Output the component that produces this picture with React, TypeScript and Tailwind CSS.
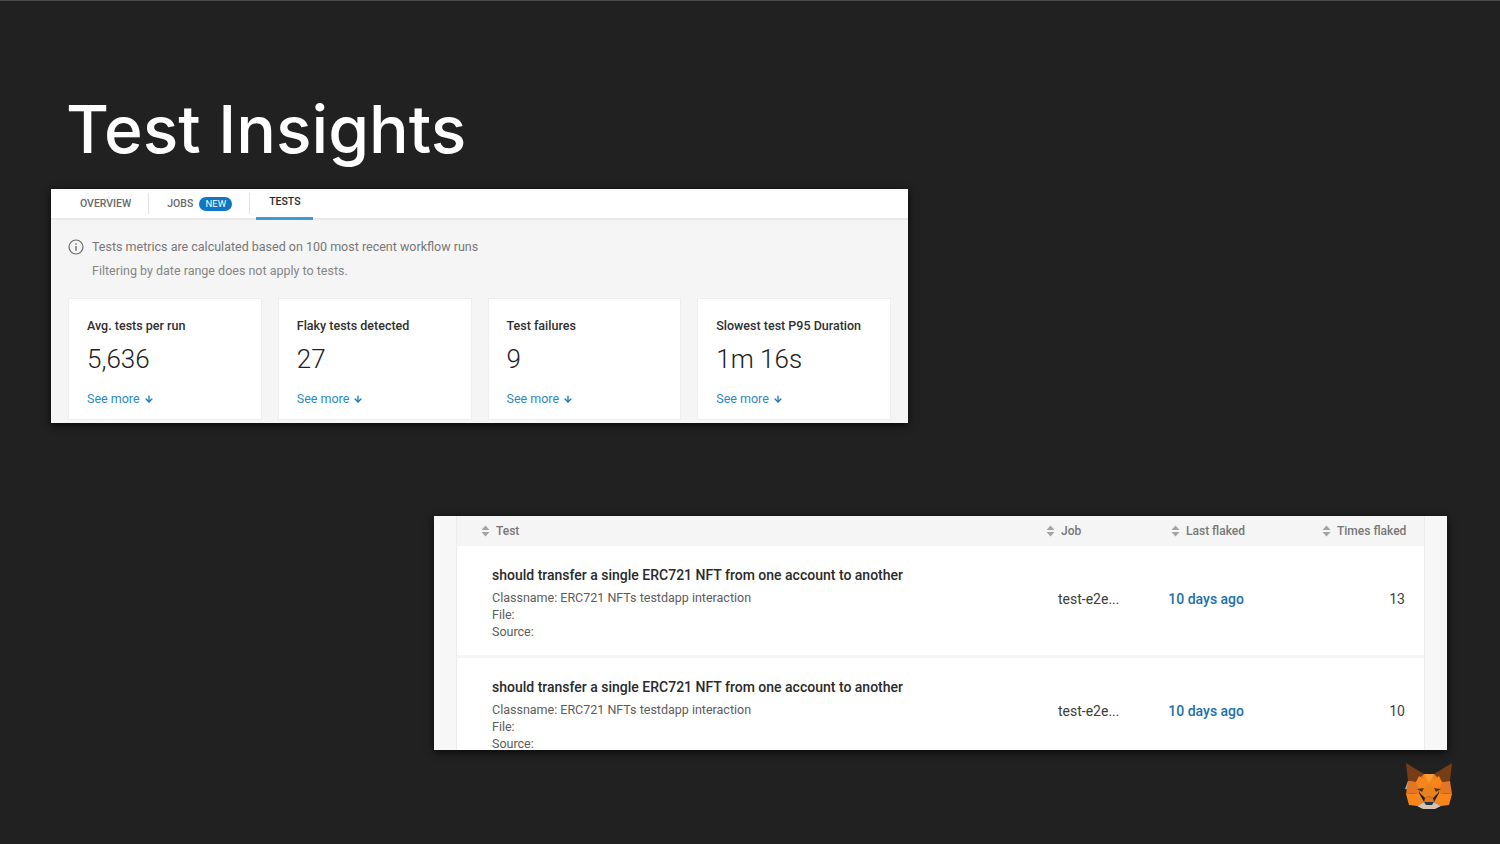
import React from "react";
import { ArrowDown } from "lucide-react";

const cards = [
  { title: "Avg. tests per run", value: "5,636" },
  { title: "Flaky tests detected", value: "27" },
  { title: "Test failures", value: "9" },
  { title: "Slowest test P95 Duration", value: "1m 16s" },
];

const rows = [{ flaked: "13" }, { flaked: "10" }];

function SortIcon() {
  return (
    <svg width="9" height="12" viewBox="0 0 9 12" className="shrink-0">
      <path d="M4.5 0.5 L8.5 5 H0.5 Z" fill="#a3a3a3" />
      <path d="M4.5 11.5 L8.5 7 H0.5 Z" fill="#a3a3a3" />
    </svg>
  );
}

function InfoIcon() {
  return (
    <svg width="16" height="16" viewBox="0 0 16 16" className="shrink-0">
      <circle cx="8" cy="8" r="7" fill="none" stroke="#6a6a6a" strokeWidth="1.2" />
      <rect x="7.3" y="7" width="1.4" height="4.8" fill="#6a6a6a" />
      <rect x="7.3" y="4.2" width="1.4" height="1.5" fill="#6a6a6a" />
    </svg>
  );
}

function Fox() {
  return (
    <svg width="48" height="46" viewBox="0 0 48 46">
      <polygon points="1,0 19,11 11,19 3,18" fill="#763d16" />
      <polygon points="47,0 29,11 37,19 45,18" fill="#763d16" />
      <polygon points="19,11 29,11 37,19 24,20 11,19" fill="#f5841f" />
      <polygon points="3,18 11,19 7,27 0,26" fill="#c0ad9e" />
      <polygon points="3,18 11,19 19,11 14,30 1,31" fill="#e27625" />
      <polygon points="45,18 37,19 29,11 34,30 47,31" fill="#e27625" />
      <polygon points="14,13 24,20 34,13 37,19 33,30 15,30 11,19" fill="#f6851b" />
      <polygon points="19,11 24,20 29,11" fill="#f89d35" />
      <polygon points="24,20 15,30 20,35 24,33" fill="#e8821e" />
      <polygon points="24,20 33,30 28,35 24,33" fill="#e8821e" />
      <polygon points="1,31 14,30 19,39 12,43 4,42" fill="#f6851b" />
      <polygon points="47,31 34,30 29,39 36,43 44,42" fill="#f6851b" />
      <polygon points="12,26 19,25 17,29" fill="#5b3410" />
      <polygon points="36,26 29,25 31,29" fill="#5b3410" />
      <polygon points="20,35 24,33 28,35 29,39 19,39" fill="#e4761b" />
      <polygon points="12,43 19,39 29,39 36,43 30,46 18,46" fill="#d7c1b3" />
      <polygon points="19,39 29,39 27,42 21,42" fill="#233447" />
    </svg>
  );
}

function SeeMore() {
  return (
    <div className="mt-[15px] flex items-center gap-[4px] text-[12.5px] leading-[16px] text-[#2b8ac6]">
      See more
      <ArrowDown size={10} strokeWidth={3.2} className="text-[#1b75b8]" />
    </div>
  );
}

function Tabs() {
  return (
    <div className="flex h-[31px] items-start border-b-2 border-[#e9e9e9] bg-white text-[10.5px] font-medium leading-[26px]">
      <div className="mt-[4px] flex h-[21px] items-center border-r border-[#e3e3e3] pl-[29px] pr-[17px] text-[#6a6a6a]">
        OVERVIEW
      </div>
      <div className="mt-[4px] flex h-[21px] items-center gap-[6px] border-r border-[#e3e3e3] pl-[18px] pr-[17px] text-[#6a6a6a]">
        JOBS
        <span className="flex h-[14px] w-[33px] items-center justify-center rounded-full bg-[#0f76c6] text-[9.5px] font-normal text-white">
          NEW
        </span>
      </div>
      <div className="ml-[6px] flex h-[31px] w-[57px] justify-center border-b-[3px] border-[#3f9bd6] text-[#2a2a2a]">
        TESTS
      </div>
    </div>
  );
}

function MetricsPanel() {
  return (
    <div className="ml-[51px] mt-[20px] h-[234px] w-[857px] overflow-hidden bg-[#f5f5f5] shadow-[0_2px_8px_rgba(0,0,0,0.8)] font-['Roboto',sans-serif]">
      <Tabs />
      <div className="px-[17px] pt-[18px]">
        <div className="flex items-center gap-[8px] text-[12.5px] leading-[18px] text-[#777777]">
          <InfoIcon />
          Tests metrics are calculated based on 100 most recent workflow runs
        </div>
        <div className="mt-[6px] pl-[24px] text-[12.5px] leading-[18px] text-[#858585]">
          Filtering by date range does not apply to tests.
        </div>
        <div className="mt-[18px] grid grid-cols-4 gap-[16px]">
          {cards.map((c) => (
            <div key={c.title} className="h-[122px] border border-[#eeeeee] bg-white pl-[18px] pt-[19px]">
              <div className="text-[12.5px] font-medium leading-[16px] text-[#2f2f2f]">{c.title}</div>
              <div className="mt-[8px] text-[26px] font-light leading-[34px] text-[#222222]">{c.value}</div>
              <SeeMore />
            </div>
          ))}
        </div>
      </div>
    </div>
  );
}

function TestRow({ flaked }: { flaked: string }) {
  return (
    <div className="flex h-[112px] border-b-[3px] border-[#f5f5f5] bg-white">
      <div className="w-[601px] pl-[35px] pt-[19px]">
        <div className="text-[14px] font-medium leading-[20px] text-[#2a2a2a]">
          should transfer a single ERC721 NFT from one account to another
        </div>
        <div className="mt-[4px] text-[12.5px] leading-[17px] text-[#5c5c5c]">
          Classname: ERC721 NFTs testdapp interaction
          <br />
          File:
          <br />
          Source:
        </div>
      </div>
      <div className="flex w-[108px] items-center pb-[2px] text-[14px] text-[#3d3d3d]">test-e2e...</div>
      <div className="flex w-[78px] items-center justify-end pb-[2px] text-[14px] font-medium text-[#206fb0]">
        10 days ago
      </div>
      <div className="flex w-[161px] items-center justify-end pb-[2px] text-[14px] text-[#3d3d3d]">{flaked}</div>
    </div>
  );
}

function FlakyPanel() {
  return (
    <div className="ml-[434px] mt-[93px] flex h-[234px] w-[1013px] overflow-hidden bg-[#f7f7f7] px-[22px] shadow-[0_2px_8px_rgba(0,0,0,0.8)] font-['Roboto',sans-serif]">
      <div className="w-full border-x border-[#ececec]">
        <div className="flex h-[30px] items-center bg-[#f5f5f5] text-[12px] font-medium text-[#777777]">
          <div className="flex w-[589px] items-center gap-[6px] pl-[24px]"><SortIcon />Test</div>
          <div className="flex w-[125px] items-center gap-[6px]"><SortIcon />Job</div>
          <div className="flex w-[151px] items-center gap-[6px]"><SortIcon />Last flaked</div>
          <div className="flex items-center gap-[6px]"><SortIcon />Times flaked</div>
        </div>
        {rows.map((r) => (
          <TestRow key={r.flaked} flaked={r.flaked} />
        ))}
      </div>
    </div>
  );
}

export default function App() {
  return (
    <div className="relative h-[844px] w-[1500px] overflow-hidden border-t border-[#4a4a4a] bg-[#212121]">
      <h1 className="pl-[66px] pt-[88px] text-[66px] font-medium leading-[80px] text-white font-['Inter',sans-serif]">
        Test Insights
      </h1>
      <MetricsPanel />
      <FlakyPanel />
      <div className="absolute left-[1405px] top-[762px]">
        <Fox />
      </div>
    </div>
  );
}
